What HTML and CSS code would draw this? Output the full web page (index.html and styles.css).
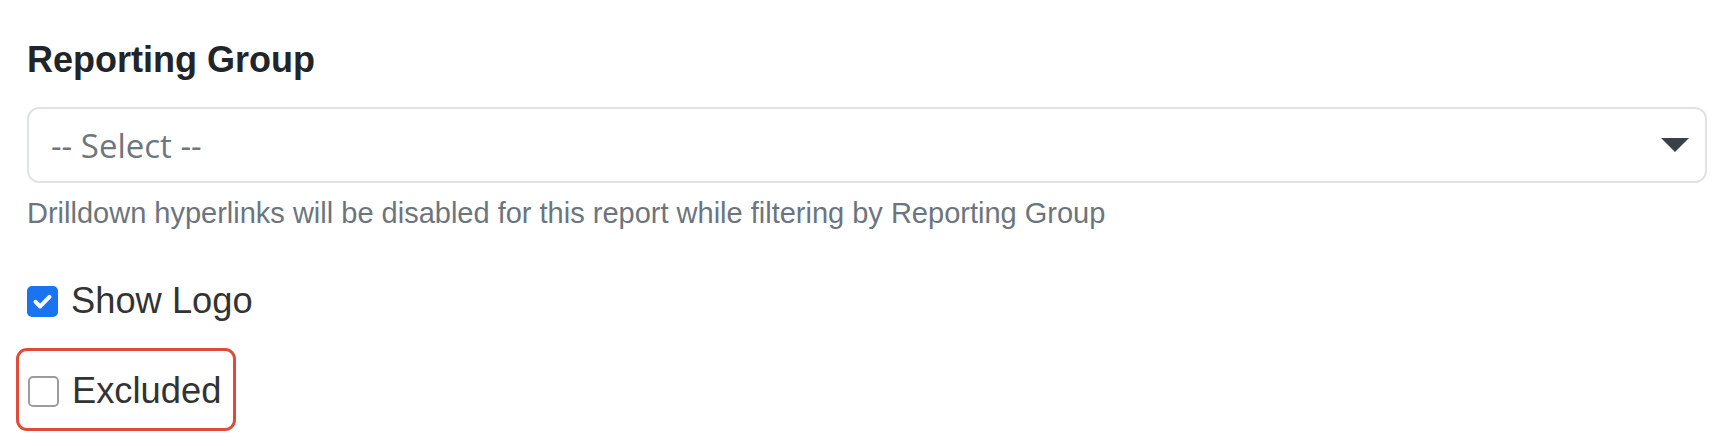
FILE: index.html
```html
<!DOCTYPE html>
<html lang="en">
<head>
<meta charset="utf-8">
<title>Reporting Group</title>
<link rel="stylesheet" href="styles.css">
</head>
<body>
<div class="page">
  <h2 class="title">Reporting Group</h2>
  <div class="select">
    <span class="select-text">-- Select --</span>
    <svg class="caret" width="28" height="14" viewBox="0 0 28 14"><path d="M0 0H28L14 14Z" fill="#3b4046"/></svg>
  </div>
  <div class="hint">Drilldown hyperlinks will be disabled for this report while filtering by Reporting Group</div>
  <div class="check-row">
    <span class="box checked"><svg width="31" height="31" viewBox="0 0 20 20"><path d="M5.5 10.2l3 3l6-6.2" fill="none" stroke="#fff" stroke-width="2.6" stroke-linecap="round" stroke-linejoin="round"/></svg></span>
    <span class="label">Show Logo</span>
  </div>
  <div class="highlight">
    <div class="check-row">
      <span class="box"></span>
      <span class="label">Excluded</span>
    </div>
  </div>
</div>
</body>
</html>
```
FILE: styles.css
```css
html, body {
  margin: 0;
  padding: 0;
  background: #fff;
}
.page {
  padding: 42px 22px 0 27px;
  font-family: "Liberation Sans", Arial, sans-serif;
}
.title {
  margin: 0 0 29px 0;
  font-size: 36px;
  line-height: 36px;
  font-weight: 700;
  color: #212529;
}
.select {
  height: 76px;
  box-sizing: border-box;
  border: 2px solid #dfe2e6;
  border-radius: 12px;
  display: flex;
  align-items: center;
  justify-content: space-between;
  padding: 0 16px 0 22px;
}
.select-text {
  font-family: "Open Sans", sans-serif;
  font-size: 33px;
  color: #6f777e;
}
.caret {
  display: block;
}
.hint {
  margin-top: 16px;
  font-size: 29px;
  line-height: 1;
  color: #6c757d;
}
.check-row {
  display: flex;
  align-items: center;
  gap: 13px;
  height: 36px;
}
.page > .check-row {
  margin-top: 55px;
}
.box {
  width: 31px;
  height: 31px;
  box-sizing: border-box;
  border: 2px solid #9c9c9c;
  border-radius: 5px;
  display: flex;
  align-items: center;
  justify-content: center;
}
.box.checked {
  background: #1a73f0;
  border-color: #1a73f0;
}
.box svg {
  display: block;
  flex: none;
}
.label {
  font-size: 36.3px;
  line-height: 36px;
  color: #333;
}
.highlight {
  margin: 29px 0 0 -11px;
  display: flex;
  width: fit-content;
  border: 3px solid #e04a3a;
  border-radius: 11px;
  padding: 22px 12px 19px 9px;
}
```
